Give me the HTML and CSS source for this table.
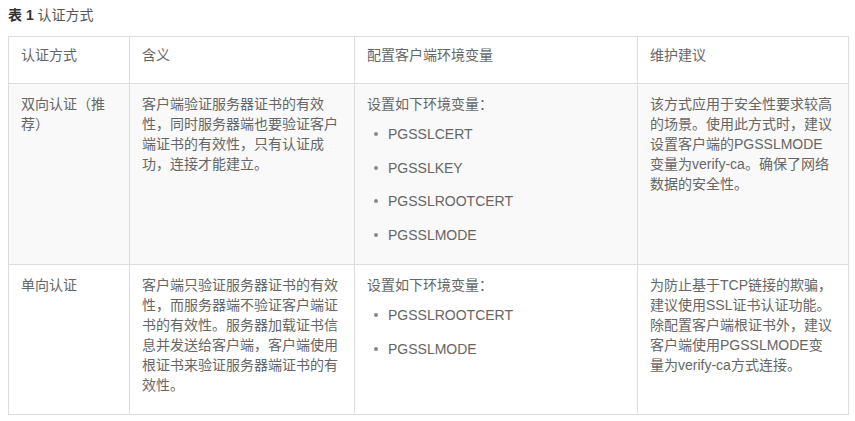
FILE: index.html
```html
<!DOCTYPE html>
<html lang="zh-CN">
<head>
<meta charset="utf-8">
<title>表 1 认证方式</title>
<link rel="stylesheet" href="styles.css">
</head>
<body>
<div class="page">
  <p class="caption"><b>表 1</b> 认证方式</p>
  <table class="auth-table">
    <colgroup>
      <col class="c1"><col class="c2"><col class="c3"><col class="c4">
    </colgroup>
    <thead>
      <tr>
        <th>认证方式</th>
        <th>含义</th>
        <th>配置客户端环境变量</th>
        <th>维护建议</th>
      </tr>
    </thead>
    <tbody>
      <tr class="alt">
        <td>双向认证（推荐）</td>
        <td>客户端验证服务器证书的有效性，同时服务器端也要验证客户端证书的有效性，只有认证成功，连接才能建立。</td>
        <td>
          <p class="intro">设置如下环境变量：</p>
          <ul class="vars">
            <li>PGSSLCERT</li>
            <li>PGSSLKEY</li>
            <li>PGSSLROOTCERT</li>
            <li>PGSSLMODE</li>
          </ul>
        </td>
        <td>该方式应用于安全性要求较高的场景。使用此方式时，建议设置客户端的PGSSLMODE变量为verify-ca。确保了网络数据的安全性。</td>
      </tr>
      <tr>
        <td>单向认证</td>
        <td>客户端只验证服务器证书的有效性，而服务器端不验证客户端证书的有效性。服务器加载证书信息并发送给客户端，客户端使用根证书来验证服务器端证书的有效性。</td>
        <td>
          <p class="intro">设置如下环境变量：</p>
          <ul class="vars">
            <li>PGSSLROOTCERT</li>
            <li>PGSSLMODE</li>
          </ul>
        </td>
        <td>为防止基于TCP链接的欺骗，建议使用SSL证书认证功能。除配置客户端根证书外，建议客户端使用PGSSLMODE变量为verify-ca方式连接。</td>
      </tr>
    </tbody>
  </table>
</div>
</body>
</html>
```

FILE: styles.css
```css
html, body {
  margin: 0;
  padding: 0;
  background: #ffffff;
}

body {
  font-family: "Liberation Sans", "Noto Sans CJK SC", sans-serif;
  font-size: 14px;
  line-height: 20px;
  color: #666666;
}

.page {
  padding: 5px 7px 0 8px;
}

.caption {
  margin: 0 0 11px 0;
  color: #555555;
  line-height: 20px;
}

.caption b {
  color: #333333;
  font-weight: bold;
}

.auth-table {
  width: 840px;
  table-layout: fixed;
  border-collapse: collapse;
  border: 1px solid #dddddd;
}

.c1 { width: 121px; }
.c2 { width: 225px; }
.c3 { width: 283px; }
.c4 { width: 211px; }

.auth-table th,
.auth-table td {
  border: 1px solid #dddddd;
  text-align: left;
  vertical-align: top;
  font-weight: normal;
  color: #666666;
  padding: 10px 12px 19px 12px;
  word-break: normal;
}

.auth-table th {
  padding-top: 8px;
  padding-bottom: 18px;
  background: #ffffff;
}

.auth-table tr.alt td {
  background: #f9f9f9;
}

.intro {
  margin: 0;
}

.vars {
  list-style: none;
  margin: 10px 0 0 0;
  padding: 0;
}

.vars li {
  display: flex;
  align-items: center;
  line-height: 20px;
}

.vars li + li {
  margin-top: 13.67px;
}

.vars li::before {
  content: "";
  flex: none;
  width: 4px;
  height: 4px;
  border-radius: 50%;
  background: #888888;
  margin-left: 7px;
  margin-right: 10px;
}
```
